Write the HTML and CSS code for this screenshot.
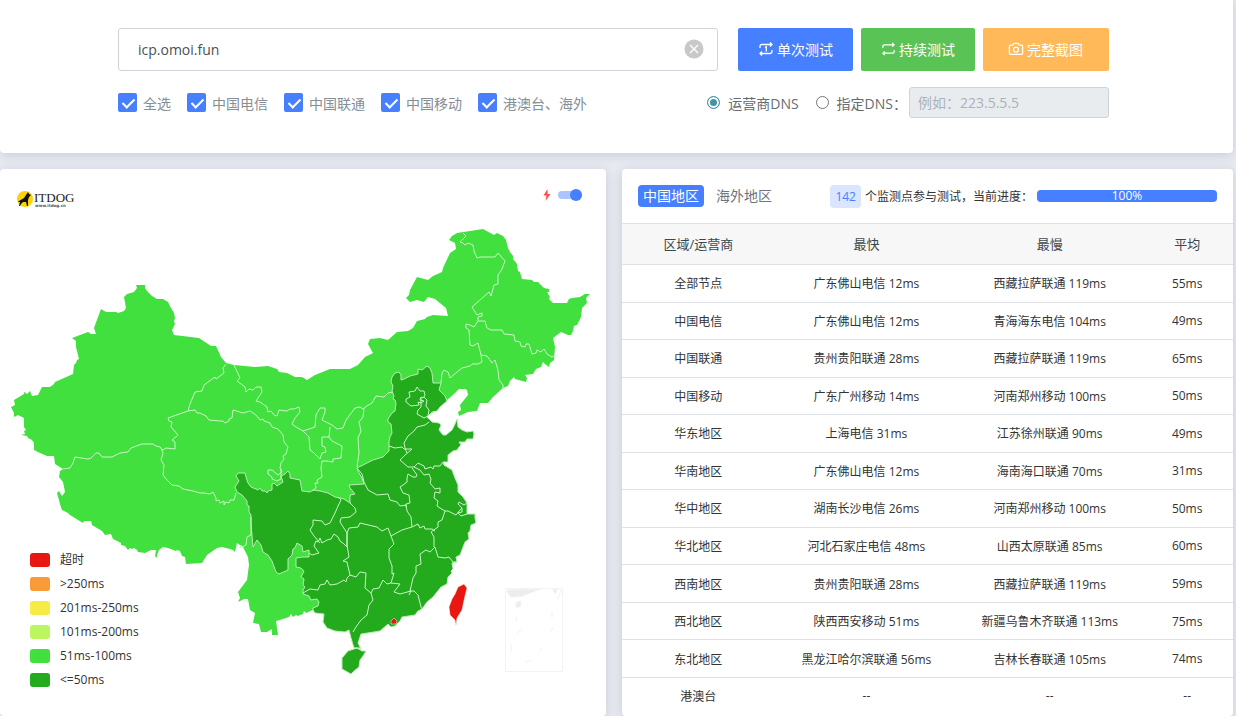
FILE: index.html
```html
<!DOCTYPE html>
<html lang="zh-CN">
<head>
<meta charset="utf-8">
<meta name="viewport" content="width=device-width, initial-scale=1">
<title>ITDOG 网站测速</title>
<link rel="stylesheet" href="styles.css">
</head>
<body>
<form class="panel search">
  <div class="search-row">
    <div class="host">
      <input class="host-input" type="text" value="icp.omoi.fun" aria-label="域名">
      <button class="host-clear" type="button" aria-label="清空">
        <svg width="20" height="20" viewBox="0 0 20 20"><circle cx="10" cy="10" r="9.5" fill="#c8c8c8"/><path d="M6 6l8 8M14 6l-8 8" stroke="#fff" stroke-width="1.3"/></svg>
      </button>
    </div>
    <div class="actions">
      <button class="btn btn-blue" type="button">
        <svg width="16" height="16" viewBox="0 0 16 16"><path d="M2 7V5.200Q2 3.500 3.700 3.500H14M12 1.500l2 2-2 2M14 9v1.800q0 1.700-1.700 1.700H2M4 10.500l-2 2 2 2M7 6.500l1.300-.8V10.500"/></svg>单次测试</button>
      <button class="btn btn-green" type="button">
        <svg width="15" height="16" viewBox="0 0 16 16"><path d="M2 7V5.200Q2 3.500 3.700 3.500H14M12 1.500l2 2-2 2M14 9v1.800q0 1.700-1.700 1.700H2M4 10.500l-2 2 2 2"/></svg>持续测试</button>
      <button class="btn btn-orange" type="button">
        <svg width="16" height="16" viewBox="0 0 16 16"><path d="M2.500 4.200H4.600L6 2.300H10L11.400 4.200H13.500Q14.600 4.200 14.600 5.300V12.300Q14.600 13.400 13.500 13.400H2.500Q1.400 13.400 1.400 12.300V5.300Q1.400 4.200 2.500 4.200Z"/><circle cx="8" cy="8.600" r="2.500"/></svg>完整截图</button>
    </div>
  </div>
  <div class="search-row options">
    <div class="checks">
      <label class="check"><input type="checkbox" checked>全选</label>
      <label class="check"><input type="checkbox" checked>中国电信</label>
      <label class="check"><input type="checkbox" checked>中国联通</label>
      <label class="check"><input type="checkbox" checked>中国移动</label>
      <label class="check"><input type="checkbox" checked>港澳台、海外</label>
    </div>
    <div class="dns">
      <label class="radio"><input type="radio" name="dns" checked>运营商DNS</label>
      <label class="radio"><input type="radio" name="dns">指定DNS：</label>
      <input class="dns-input" type="text" placeholder="例如：223.5.5.5" aria-label="DNS" disabled>
    </div>
  </div>
</form>

<main class="columns">
  <section class="panel map-panel">
    <svg class="map" viewBox="0 169 606 547" role="img" aria-label="中国地图">
      <g>
        <circle cx="25" cy="199" r="8" fill="#fbd307"/>
        <path d="M28 192l1 2 2 1-2 2-1 3 0 6h-1l-1-4-3 0-2 2-1 2h-1l1-4-2 0 1-1 5-3 2-3z" fill="#111"/>
        <text class="logo-name" x="34" y="202" font-size="13">ITDOG</text>
        <text class="logo-url" x="35" y="207" font-size="4">www.itdog.cn</text>
      </g>
      <path class="fast" d="M11 407 15 405 14 400 24 394 24 392 27 394 30 391 32 396 38 395 42 387 50 387 54 384 55 382 73 374 74 365 76 363 77 360 79 359 76 347 76 341 72 338 88 332 91 334 96 334 94 328 101 309 106 312 116 312 118 313 124 311 126 308 124 297 127 294 134 292 137 288 136 285 145 285 145 288 147 291 152 296 157 299 163 299 168 302 171 308 174 313 175 318 174 321 175 324 172 330 174 335 199 338 211 346 216 346 221 357 226 363 234 365 255 367 268 366 277 369 279 372 287 373 295 377 302 377 307 380 315 375 330 369 350 369 358 365 365 357 373 353 368 344 370 339 380 338 388 340 397 332 408 331 413 328 417 321 425 319 427 317 433 315 448 316 446 308 435 299 428 297 424 302 417 300 410 302 406 298 409 295 410 290 417 277 428 280 433 276 442 272 443 268 450 253 456 249 455 243 449 240 452 236 457 233 483 229 494 235 497 233 503 236 506 240 508 248 510 252 513 256 513 259 517 264 518 271 520 272 522 279 532 280 534 282 538 282 544 288 549 289 549 292 547 292 550 297 549 299 553 303 567 303 569 299 572 298 580 297 585 294 590 294 586 298 587 303 582 308 581 317 577 325 574 326 573 331 571 335 568 335 561 332 553 338 555 347 554 360 550 363 549 367 545 364 543 362 541 367 536 369 533 374 525 375 527 378 526 382 515 379 514 377 510 381 508 386 503 388 493 397 488 403 480 403 477 411 468 412 459 416 458 412 461 410 460 405 468 395 467 390 465 389 459 389 454 394 447 400 440 407 432 413 427 417 432 422 430 440 450 450 440 465 452 480 450 520 440 570 400 600 362 610 313 610 306 613 304 611 303 614 298 616 296 615 293 617 291 614 289 617 280 620 276 621 278 635 272 635 272 629 267 632 261 632 259 624 253 623 255 613 250 610 248 599 244 599 238 602 240 598 238 592 247 580 249 565 248 557 246 553 243 547 237 543 235 552 233 550 230 549 222 547 217 548 207 555 202 563 186 564 185 557 182 556 180 551 177 550 176 551 168 548 163 547 159 550 157 555 157 558 155 556 156 550 151 550 145 553 138 552 137 550 134 548 132 549 130 548 128 550 125 546 121 545 121 543 117 541 113 539 111 534 105 535 102 531 92 525 91 521 84 521 83 523 70 515 68 513 62 510 60 504 59 500 57 493 59 491 62 496 65 492 63 482 59 477 60 471 63 469 55 464 54 456 47 456 40 453 34 450 34 443 32 440 28 438 27 436 21 435 25 434 24 431 26 430 24 427 24 418 18 415 14 417 14 413z"/>
      <path class="fastest" d="M237 492 235 487 239 481 236 476 238 473 245 473 246 477 248 483 251 487 256 489 258 490 260 488 262 491 265 491 267 493 268 491 272 490 272 484 274 483 277 486 283 482 281 476 285 474 288 471 290 474 290 478 300 480 302 491 310 492 313 490 320 491 328 493 335 497 344 499 350 503 350 495 355 494 350 488 349 485 364 484 362 478 359 473 357 468 373 460 383 457 389 451 389 442 390 437 392 433 391 424 388 422 388 419 392 413 395 411 396 403 395 400 393 399 394 396 392 391 393 386 391 382 392 377 395 373 399 372 401 375 401 380 404 379 410 376 418 374 418 369 422 370 427 366 430 368 432 373 433 383 441 383 439 390 442 393 445 396 447 401 440 407 437 411 432 412 427 417 432 422 439 423 441 425 439 430 443 435 446 435 452 430 455 424 457 419 458 427 462 430 467 432 473 431 474 434 473 439 467 439 465 442 459 442 461 445 459 447 457 450 453 451 448 455 448 459 448 462 443 462 444 465 452 470 455 478 458 485 458 492 463 497 467 503 467 514 475 514 475 518 476 523 471 525 470 531 468 533 469 539 465 542 460 555 456 557 457 562 452 563 453 569 451 571 452 573 448 577 447 584 441 587 433 597 427 602 422 609 418 611 415 615 402 617 400 621 395 626 391 627 388 624 380 631 374 632 361 634 358 643 361 649 354 648 351 638 349 630 345 632 335 631 327 628 323 622 324 614 315 613 313 610 313 608 318 606 319 602 317 599 311 600 309 596 303 594 303 590 305 587 303 585 304 579 301 577 304 571 301 568 296 567 296 558 303 557 309 557 309 550 303 552 302 546 297 543 295 548 293 549 292 555 288 559 288 570 279 574 276 572 272 561 268 555 263 552 261 545 257 540 253 547 251 523 251 515 249 512 249 506 247 505 247 501 242 495z"/>
      <path class="fastest" d="M348 651 357 648 362 651 366 651 363 656 360 660 359 667 354 671 351 674 342 669 342 658z"/>
      <g class="border">
        <path d="M63 469 70 468 73 463 75 457 88 459 91 458 96 453 99 453 102 457 112 457 120 453 128 452 131 448 142 444 153 444 156 446 160 447 163 450 166 448 175 449 175 442 172 440 178 435 171 427 172 422 169 421 168 418 188 411 190 404 195 392 202 391 204 385 215 377 216 379 224 373 223 368 226 364"/>
        <path d="M188 411 195 410 197 413 200 413 206 416 209 420 220 421 223 421 225 423 229 421 229 419 232 418 233 410 243 413 250 411 256 415 260 420 263 419 264 421 270 423 272 427 278 429 283 435 284 442 288 447 286 454 283 456 284 459 281 463 280 468 282 472 278 475 272 470 268 470 268 474 272 477 272 479 277 481M161 448 163 453 161 460 164 465 163 475 167 480 172 485 179 486 183 489 193 491 200 493 204 493 210 494 213 492 216 498 216 501 219 500 220 503 224 501 224 505 226 502 229 503 230 500 234 500 236 493M251 517 251 535 247 537 246 545 240 548 241 545"/>
        <path d="M234 365 240 378 237 381 245 387 246 392 249 389 253 390 256 387 261 387 262 392 256 401 260 402 267 407 268 412 271 411 274 415 277 416 279 410 287 411 290 409 294 409 299 407 300 412 295 418 292 424 296 427 303 431 315 427 316 415 320 408 325 408 325 412 322 420 332 425 337 429 343 428 346 420 355 408 360 407 363 409 365 407 372 403 376 396 384 397 388 393 393 392"/>
        <path d="M303 431 309 437 310 450 314 453 320 459 322 453 326 452 325 447 322 446 322 437 329 437 330 427M329 437 332 441 342 446 341 458 333 459 333 462 327 461 322 461 321 468 322 477 317 480 318 483 315 483 316 488 312 491M364 408 363 417 359 422 361 431 358 438 359 453 357 467M281 469 281 479 277 481"/>
        <path d="M463 233 466 236 460 242 463 243 465 245 468 243 473 245 474 251 477 258 480 257 495 257 498 253 505 261 502 269 498 275 498 284 494 285 491 296 489 292 472 307 477 315 482 313 482 316 478 317 478 321 474 327 470 325 466 324 466 328 469 330 470 345 473 346 478 343 481 355 482 362 478 364 472 364 470 366 462 368 457 372 450 378 448 372 444 370 442 373 441 383"/>
        <path d="M478 321 485 321 487 328 491 330 502 330 504 334 514 335 515 341 520 342 521 346 525 347 526 344 529 344 532 354 536 353 537 350 541 352 544 349 547 354 552 357 554 356M481 355 487 356 492 363 495 360 498 370 499 380 503 385 503 388"/>
        <path d="M417 387 420 391 424 391 425 395 423 398 421 397 420 400 424 401 421 403 418 402 419 405 411 406 406 402 406 399 410 397 409 392 415 391zM424 397 427 400 426 406 429 410 428 416 424 418 417 414 418 410 421 407 421 398M429 422 425 425 417 427 414 431 408 436 404 443 405 448 407 453M389 446 395 448 402 447 404 449 412 449 404 456 400 460 408 467 414 467 418 463 424 466 425 469 431 467 433 469 434 466 440 466 443 462"/>
        <path d="M412 468 417 475 416 477 413 477 408 474 407 478 407 482 403 485 400 487 403 493 409 495 410 503 406 504 406 507M414 467 420 470 424 475 429 474 431 479 430 483 435 489 440 488 440 493 435 492 434 498 438 501 437 506 440 508 445 511 448 511 456 515 460 510 462 508 458 504 459 502 464 505 467 503M462 508 462 512 458 513 461 516 467 514"/>
        <path d="M357 468 362 474 364 482 368 490 377 495 388 494 390 500 397 502 400 506 406 505 407 511 411 517 412 527 418 524 420 528 424 526 425 529 432 529 435 531M445 511 442 520 438 522 438 527 431 532 434 537 434 547"/>
        <path d="M347 533 349 528 358 527 360 523 377 527 382 531 384 530 388 528 391 536 402 530 412 527M391 536 394 544 389 549 389 558 392 566 392 574 394 573 391 583 387 584 383 580 379 588 373 589 371 593 365 588 366 573 360 572 356 577 350 575 347 562 343 561 349 557 347 545 347 533M391 583 400 584 394 592 400 594 411 591 409 595"/>
        <path d="M410 591 413 578 416 573 416 566 421 564 420 554 426 550 430 552 435 547 438 557 445 558 449 557 453 562 457 562M410 591 414 591 418 595 421 607 422 609M371 593 373 600 369 605 367 615 361 620 356 627 353 632M303 593 310 589 318 590 320 585 325 584 327 580 330 585 337 584 344 580 346 582 347 578 350 575"/>
        <path d="M309 553 312 555 319 553 314 546 316 541 318 542 320 538 322 543 327 540 331 539 334 534 338 537 340 541 344 544 347 547 347 533 340 522 341 518 350 517 356 512 355 508 350 503M338 497 341 500 339 504 335 513 330 523 325 525 322 521 313 520 313 525 310 530 314 536 320 543M361 648 354 648"/>
      </g>
      <path class="timeout" d="M464 584 467 588 465 596 462 610 457 618 456 626 455 620 450 615 449 607 452 599 455 594 458 587z"/>
      <path class="timeout" d="M391 621 394 618 397 621 396 624 391 624z"/>
      <g class="inset"><rect x="505.500" y="588.500" width="57" height="83"/><path d="M507 590l33-1-18 7-11 1-4-5zM516 603l5-2-1 6-4 0zM553 589l4 0-2 5zM516 617l1 4M521 630l-4 3M550 632l3-4M511 645l1 7M542 648l-3 4M526 662l6-2M552 612l0 6M561 590l-3 9"/></g>
    </svg>
    <div class="map-toggle">
      <svg width="8" height="12" viewBox="0 0 8 12"><path d="M4.500 0L0.500 6.500H3.500L2.500 12L7.500 5H4.500Z" fill="#ff4c4c"/></svg>
      <input type="checkbox" class="switch" checked aria-label="闪烁效果">
    </div>
    <ul class="legend">
      <li><i class="swatch s-timeout"></i>超时</li>
      <li><i class="swatch s-250"></i>&gt;250ms</li>
      <li><i class="swatch s-200"></i>201ms-250ms</li>
      <li><i class="swatch s-100"></i>101ms-200ms</li>
      <li><i class="swatch s-50"></i>51ms-100ms</li>
      <li><i class="swatch s-0"></i>&lt;=50ms</li>
    </ul>
  </section>

  <section class="panel stats">
    <header class="stats-head">
      <nav class="tabs">
        <a class="tab tab-active" href="#china">中国地区</a>
        <a class="tab" href="#oversea">海外地区</a>
      </nav>
      <div class="progress-info">
        <span class="count">142</span>
        <span>个监测点参与测试，当前进度：</span>
        <div class="progress" role="progressbar" aria-valuenow="100" aria-valuemin="0" aria-valuemax="100"><div class="progress-bar" style="width:100%">100%</div></div>
      </div>
    </header>
    <table class="table">
      <thead><tr><th class="c-area">区域/运营商</th><th class="c-time">最快</th><th class="c-time">最慢</th><th>平均</th></tr></thead>
      <tbody>
        <tr><td>全部节点</td><td>广东佛山电信 12ms</td><td>西藏拉萨联通 119ms</td><td>55ms</td></tr>
        <tr><td>中国电信</td><td>广东佛山电信 12ms</td><td>青海海东电信 104ms</td><td>49ms</td></tr>
        <tr><td>中国联通</td><td>贵州贵阳联通 28ms</td><td>西藏拉萨联通 119ms</td><td>65ms</td></tr>
        <tr><td>中国移动</td><td>广东广州移动 14ms</td><td>河南郑州移动 100ms</td><td>50ms</td></tr>
        <tr><td>华东地区</td><td>上海电信 31ms</td><td>江苏徐州联通 90ms</td><td>49ms</td></tr>
        <tr><td>华南地区</td><td>广东佛山电信 12ms</td><td>海南海口联通 70ms</td><td>31ms</td></tr>
        <tr><td>华中地区</td><td>湖南长沙电信 26ms</td><td>河南郑州移动 100ms</td><td>50ms</td></tr>
        <tr><td>华北地区</td><td>河北石家庄电信 48ms</td><td>山西太原联通 85ms</td><td>60ms</td></tr>
        <tr><td>西南地区</td><td>贵州贵阳联通 28ms</td><td>西藏拉萨联通 119ms</td><td>59ms</td></tr>
        <tr><td>西北地区</td><td>陕西西安移动 51ms</td><td>新疆乌鲁木齐联通 113ms</td><td>75ms</td></tr>
        <tr><td>东北地区</td><td>黑龙江哈尔滨联通 56ms</td><td>吉林长春联通 105ms</td><td>74ms</td></tr>
        <tr><td>港澳台</td><td>--</td><td>--</td><td>--</td></tr>
      </tbody>
    </table>
  </section>
</main>
</body>
</html>
```
FILE: styles.css
```css
* { box-sizing: border-box; }
body {
  margin: 0;
  padding-right: 3px;
  height: 100vh;
  overflow: hidden;
  background: #e8ebf0;
  color: #333;
  font-family: "Open Sans", "Noto Sans CJK SC", sans-serif;
  font-size: 14px;
}
button, input { font: inherit; }
.panel {
  background: #fff;
  border-radius: 4px;
  box-shadow: 0 2px 12px rgba(60, 80, 120, 0.2);
}
.search {
  height: 153px;
  padding: 28px 124px 0 118px;
  border-radius: 0 0 4px 4px;
}
.search-row { display: flex; justify-content: space-between; gap: 20px; }
.host { flex: 1; position: relative; display: flex; }
.host-input {
  flex: 1;
  height: 43px;
  padding: 0 48px 0 19px;
  border: 1px solid #ced4da;
  border-radius: 3px;
  color: #495057;
}
.host-clear {
  position: absolute;
  right: 14px;
  top: 11px;
  width: 20px;
  height: 20px;
  padding: 0;
  border: 0;
  background: none;
}
.host-clear svg { display: block; }
.actions { display: flex; gap: 8px; }
.btn {
  display: flex;
  align-items: center;
  justify-content: center;
  gap: 3px;
  height: 43px;
  padding: 0 20px 2px;
  border: 0;
  border-radius: 2px;
  color: #fff;
}
.btn svg { fill: none; stroke: #fff; stroke-width: 1.3; }
.btn-blue { background: #467fff; }
.btn-green { background: #5ac355; }
.btn-orange { padding: 0 26px 2px 25px; background: #ffb958; }
.options { margin-top: 16px; align-items: center; }
.checks, .dns { display: flex; align-items: center; white-space: nowrap; }
.checks { gap: 16px; color: #868e96; }
.check { display: flex; align-items: center; gap: 6px; }
.check input {
  appearance: none;
  position: relative;
  width: 19px;
  height: 19px;
  margin: 0;
  border-radius: 2px;
  background: #467fff;
}
.check input::before {
  content: "";
  position: absolute;
  left: 7px;
  top: 3px;
  width: 5px;
  height: 10px;
  border: solid #fff;
  border-width: 0 2px 2px 0;
  transform: rotate(45deg);
}
.dns { color: #666c72; }
.radio { display: flex; align-items: center; gap: 8px; margin-right: 17px; }
.radio:nth-child(2) { margin-right: 2px; }
.radio input {
  appearance: none;
  width: 13px;
  height: 13px;
  margin: 0;
  border: 1px solid #767676;
  border-radius: 50%;
  background: #fff;
}
.radio input:checked { border-color: #4095a5; background: #4095a5; box-shadow: inset 0 0 0 2px #fff; }
.dns-input {
  width: 200px;
  height: 31px;
  padding: 0 8px;
  border: 1px solid #ced4da;
  border-radius: 3px;
  background: #e9ecef;
}
.dns-input::placeholder { color: #a9b2ba; }

.columns {
  display: grid;
  grid-template-columns: 606fr 611fr;
  gap: 16px;
  margin-top: 16px;
}
.map-panel { position: relative; }
.map { display: block; width: 100%; }
.logo-name { font-family: "Liberation Serif", serif; fill: #222; }
.logo-url { font-family: "DejaVu Sans", sans-serif; font-weight: bold; fill: #555; }
.fast { fill: #42e03f; }
.fastest { fill: #24aa1d; stroke: #b9ecb6; stroke-width: 1; stroke-linejoin: round; }
.border { fill: none; stroke: #c9f5c7; stroke-width: 1; stroke-linejoin: round; }
.timeout { fill: #e81711; stroke: #fff; stroke-width: 0.5; }
.inset rect { fill: none; stroke: #f3f3f3; }
.inset path { fill: #ededed; stroke: #f1f1f1; }
.map-toggle {
  position: absolute;
  top: 20px;
  right: 24px;
  display: flex;
  align-items: center;
  gap: 7px;
}
.switch {
  appearance: none;
  display: flex;
  align-items: center;
  justify-content: flex-end;
  width: 24px;
  height: 8px;
  margin: 0;
  border-radius: 4px;
  background: #abc5ff;
}
.switch::before {
  content: "";
  width: 12px;
  height: 12px;
  border-radius: 50%;
  background: #467fff;
}
.legend {
  position: absolute;
  left: 30px;
  top: 379px;
  margin: 0;
  padding: 0;
  list-style: none;
  font-size: 12px;
  line-height: 24px;
}
.legend li { display: flex; align-items: center; gap: 10px; }
.swatch { width: 20px; height: 14px; border-radius: 3px; }
.s-timeout { background: #e81711; }
.s-250 { background: #f89a36; }
.s-200 { background: #f6ec45; }
.s-100 { background: #bdf760; }
.s-50 { background: #42e03f; }
.s-0 { background: #24aa1d; }

.stats-head {
  display: flex;
  align-items: center;
  justify-content: space-between;
  height: 54px;
  padding: 0 16px;
}
.tabs { display: flex; gap: 8px; }
.tab {
  padding: 0 4px;
  border-radius: 4px;
  color: #6c757d;
  line-height: 22px;
  text-decoration: none;
}
.tab-active { padding: 0 5px; background: #467fff; color: #fff; }
.progress-info { display: flex; align-items: center; gap: 4px; font-size: 12px; }
.count {
  padding: 0 5px;
  border-radius: 4px;
  background: #dae5ff;
  color: #467fff;
  line-height: 23px;
}
.progress { width: 180px; border-radius: 4px; background: #e9ecef; }
.progress-bar {
  height: 12px;
  border-radius: 4px;
  background: #467fff;
  color: #fff;
  line-height: 12px;
  text-align: center;
}
.table {
  width: 100%;
  height: 491px;
  table-layout: fixed;
  border-collapse: collapse;
  text-align: center;
  font-size: 12px;
  color: #333;
}
.table th {
  height: 41px;
  padding: 0 0 2px;
  border: solid #dee2e6;
  border-width: 1px 0;
  background: #f7f7f7;
  color: #3a474e;
  font-size: 13px;
  font-weight: 400;
}
.table td { padding: 0; border-top: 1px solid #dee2e6; white-space: nowrap; }
.c-area { width: 25%; }
.c-time { width: 30%; }
```
